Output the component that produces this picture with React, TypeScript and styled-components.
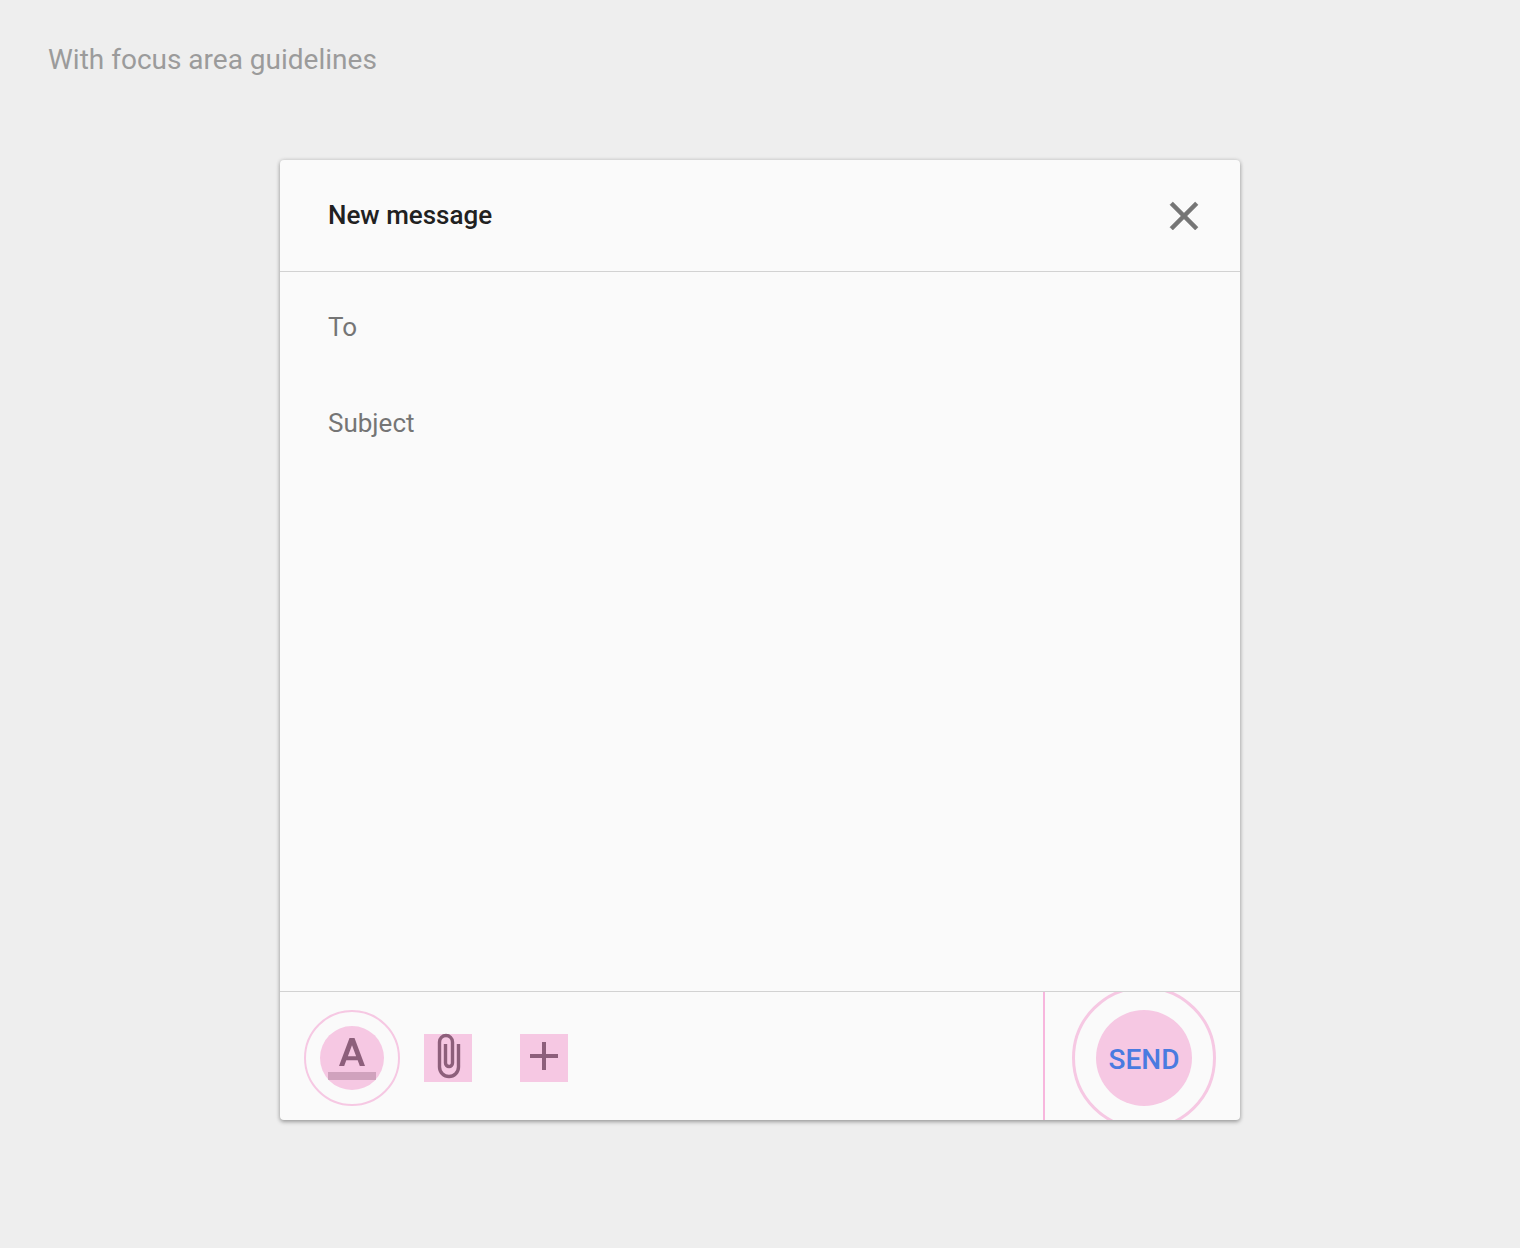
import React from "react";
import styled, { createGlobalStyle, css } from "styled-components";
import { MdAdd } from "react-icons/md";

const colors = {
  page: "#eeeeee",
  sheet: "#fafafa",
  divider: "#d2d2d2",
  guide: "#f6c8e3",
  keyline: "#f7b6dd",
  tool: "#8d5f7b",
  send: "#4a7be0",
  hint: "#757575",
};

const GlobalStyle = createGlobalStyle`
  *, *::before, *::after { box-sizing: border-box; }
  body {
    margin: 0;
    background: ${colors.page};
    font-family: Roboto, "Liberation Sans", sans-serif;
  }
`;

const Page = styled.main`
  display: flex;
  flex-direction: column;
  gap: 80px;
  min-height: 100vh;
  padding: 40px 48px 128px;
`;

const Caption = styled.h1`
  margin: 0;
  font-size: 28px;
  font-weight: 400;
  line-height: 40px;
  color: #9b9b9b;
`;

const Dialog = styled.form`
  display: flex;
  flex-direction: column;
  align-self: center;
  width: 100%;
  max-width: 960px;
  min-height: 960px;
  background: ${colors.sheet};
  border-radius: 4px;
  box-shadow:
    0 0 4px rgba(0, 0, 0, 0.14),
    0 2px 4px rgba(0, 0, 0, 0.3);
`;

const Header = styled.header`
  display: flex;
  align-items: center;
  justify-content: space-between;
  height: 112px;
  padding: 0 32px 0 48px;
  border-bottom: 1px solid ${colors.divider};
`;

const Title = styled.h2`
  margin: 0;
  padding-bottom: 2px;
  font-size: 26px;
  font-weight: 500;
  line-height: 32px;
  color: #212121;
`;

const IconButton = styled.button<{ $tone: string }>`
  position: relative;
  display: flex;
  width: 48px;
  height: 48px;
  padding: 0;
  border: 0;
  background: none;
  color: ${({ $tone }) => $tone};
  cursor: pointer;

  svg {
    position: relative;
    width: 48px;
    height: 48px;
  }
`;

const Fields = styled.div`
  display: flex;
  flex: 1;
  flex-direction: column;
  padding: 8px 48px 0;
`;

const fieldText = css`
  width: 100%;
  padding: 0;
  border: 0;
  outline: 0;
  background: none;
  font: 400 26px/32px Roboto, "Liberation Sans", sans-serif;
  color: #212121;

  &::placeholder {
    color: ${colors.hint};
    opacity: 1;
  }
`;

const Field = styled.input`
  ${fieldText}
  height: 96px;
  padding-bottom: 2px;
`;

const Body = styled.textarea`
  ${fieldText}
  flex: 1;
  resize: none;
`;

const Footer = styled.footer`
  display: flex;
  justify-content: space-between;
  height: 129px;
  border-top: 1px solid ${colors.divider};
  overflow: hidden;
`;

const Tools = styled.div`
  display: flex;
  align-items: center;
  gap: 48px;
  padding-left: 48px;
`;

const Guide = styled.span<{ $size: number; $round?: boolean; $ring?: number }>`
  position: absolute;
  top: calc(50% + 2px);
  left: 50%;
  width: ${({ $size }) => $size}px;
  height: ${({ $size }) => $size}px;
  transform: translate(-50%, -50%);
  border-radius: ${({ $round }) => ($round ? "50%" : "0")};
  pointer-events: none;
  ${({ $ring }) =>
    $ring
      ? css`
          border: ${$ring}px solid ${colors.guide};
        `
      : css`
          background: ${colors.guide};
        `}
`;

const SendArea = styled.div`
  display: flex;
  align-items: center;
  padding: 0 24px 0 27px;
  border-left: 2px solid ${colors.keyline};
`;

const SendButton = styled.button`
  position: relative;
  width: 144px;
  height: 72px;
  padding: 0;
  border: 0;
  background: none;
  font: 500 28px/32px Roboto, "Liberation Sans", sans-serif;
  color: ${colors.send};
  cursor: pointer;
`;

const SendLabel = styled.span`
  position: relative;
  display: block;
  padding-top: 8px;
`;

function CloseIcon() {
  return (
    <svg viewBox="0 0 24 24" fill="currentColor" stroke="currentColor" aria-hidden="true">
      <path
        d="M19 6.41L17.59 5 12 10.59 6.41 5 5 6.41 10.59 12 5 17.59 6.41 19 12 13.41 17.59 19 19 17.59 13.41 12z"
        strokeWidth="0.3"
        strokeLinejoin="round"
      />
    </svg>
  );
}

function PaperclipIcon() {
  return (
    <svg viewBox="0 0 24 24" fill="none" stroke="currentColor" aria-hidden="true">
      <path
        d="M17.25 6v11.5a4.75 4.75 0 0 1-9.5 0V5a3.25 3.25 0 0 1 6.5 0v10.5a1.75 1.75 0 0 1-3.5 0V6"
        strokeWidth="1.7"
      />
    </svg>
  );
}

function TextColorIcon() {
  return (
    <svg viewBox="0 0 24 24" fill="currentColor" aria-hidden="true">
      <path d="M0 20h24v4H0z" fillOpacity="0.36" />
      <path d="M10.75 3L5.5 17h2.6l1.05-2.85h5.7L15.9 17h2.6L13.25 3h-2.5zM9.94 12.1L12 6.6l2.06 5.5H9.94z" />
    </svg>
  );
}

export default function App() {
  return (
    <>
      <GlobalStyle />
      <Page>
        <Caption>With focus area guidelines</Caption>
        <Dialog onSubmit={(event) => event.preventDefault()}>
          <Header>
            <Title>New message</Title>
            <IconButton type="button" aria-label="Close" $tone={colors.hint}>
              <CloseIcon />
            </IconButton>
          </Header>
          <Fields>
            <Field type="text" aria-label="To" placeholder="To" />
            <Field type="text" aria-label="Subject" placeholder="Subject" />
            <Body aria-label="Message" />
          </Fields>
          <Footer>
            <Tools>
              <IconButton type="button" aria-label="Text color" $tone={colors.tool}>
                <Guide $size={96} $ring={2} $round />
                <Guide $size={64} $round />
                <TextColorIcon />
              </IconButton>
              <IconButton type="button" aria-label="Attach file" $tone={colors.tool}>
                <Guide $size={48} />
                <PaperclipIcon />
              </IconButton>
              <IconButton type="button" aria-label="Insert" $tone={colors.tool}>
                <Guide $size={48} />
                <MdAdd />
              </IconButton>
            </Tools>
            <SendArea>
              <SendButton type="submit">
                <Guide $size={144} $ring={3} $round />
                <Guide $size={96} $round />
                <SendLabel>SEND</SendLabel>
              </SendButton>
            </SendArea>
          </Footer>
        </Dialog>
      </Page>
    </>
  );
}
